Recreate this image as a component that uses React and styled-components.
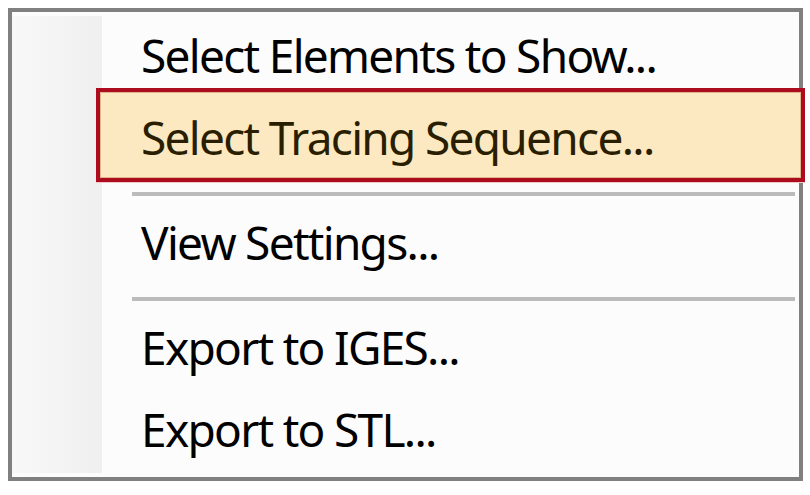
import React from "react";
import styled, { createGlobalStyle } from "styled-components";

const GlobalStyle = createGlobalStyle`
  html, body { margin: 0; padding: 0; background: #ffffff; }
  body { font-family: "Noto Sans", "Open Sans", sans-serif; }
`;

const Frame = styled.div`
  box-sizing: border-box;
  margin: 8px 0 0 8px;
  width: 795px;
  height: 473px;
  border: 4px solid #808080;
  background: #fcfcfc;
  display: grid;
  grid-template-columns: 90px 1fr;
`;

const Gutter = styled.div`
  margin: 4px 0;
  background: linear-gradient(to right, #f8f8f8, #efefef);
`;

const List = styled.div`
  display: flex;
  flex-direction: column;
  padding-top: 2px;
`;

const Item = styled.div`
  position: relative;
  height: 82px;
  display: flex;
  align-items: center;
  padding-left: 39px;
  font-size: 46px;
  letter-spacing: -1.7px;
  line-height: 80px;
  color: ${(p) => (p.$active ? "#2a1e00" : "#000000")};
  white-space: nowrap;

  &::before {
    content: "";
    display: ${(p) => (p.$active ? "block" : "none")};
    position: absolute;
    top: -8px;
    bottom: -4px;
    left: -6px;
    right: -6px;
    border: 4px solid #ad0c1e;
    box-shadow: inset 0 0 0 1px #e0b48c, 0 1px 0 #f0c8c8;
    background: #fce9c1;
  }
`;

const Label = styled.span`
  position: relative;
`;

const Separator = styled.div`
  height: 4px;
  margin: 14px 4px 5px 30px;
  background: #bbbbbb;
`;

const items = [
  { label: "Select Elements to Show..." },
  { label: "Select Tracing Sequence...", active: true },
  { sep: true },
  { label: "View Settings..." },
  { sep: true },
  { label: "Export to IGES..." },
  { label: "Export to STL..." },
];

export default function App() {
  return (
    <>
      <GlobalStyle />
      <Frame>
        <Gutter />
        <List>
          {items.map((it, i) =>
            it.sep ? (
              <Separator key={i} />
            ) : (
              <Item key={i} $active={it.active}>
                <Label>{it.label}</Label>
              </Item>
            )
          )}
        </List>
      </Frame>
    </>
  );
}
